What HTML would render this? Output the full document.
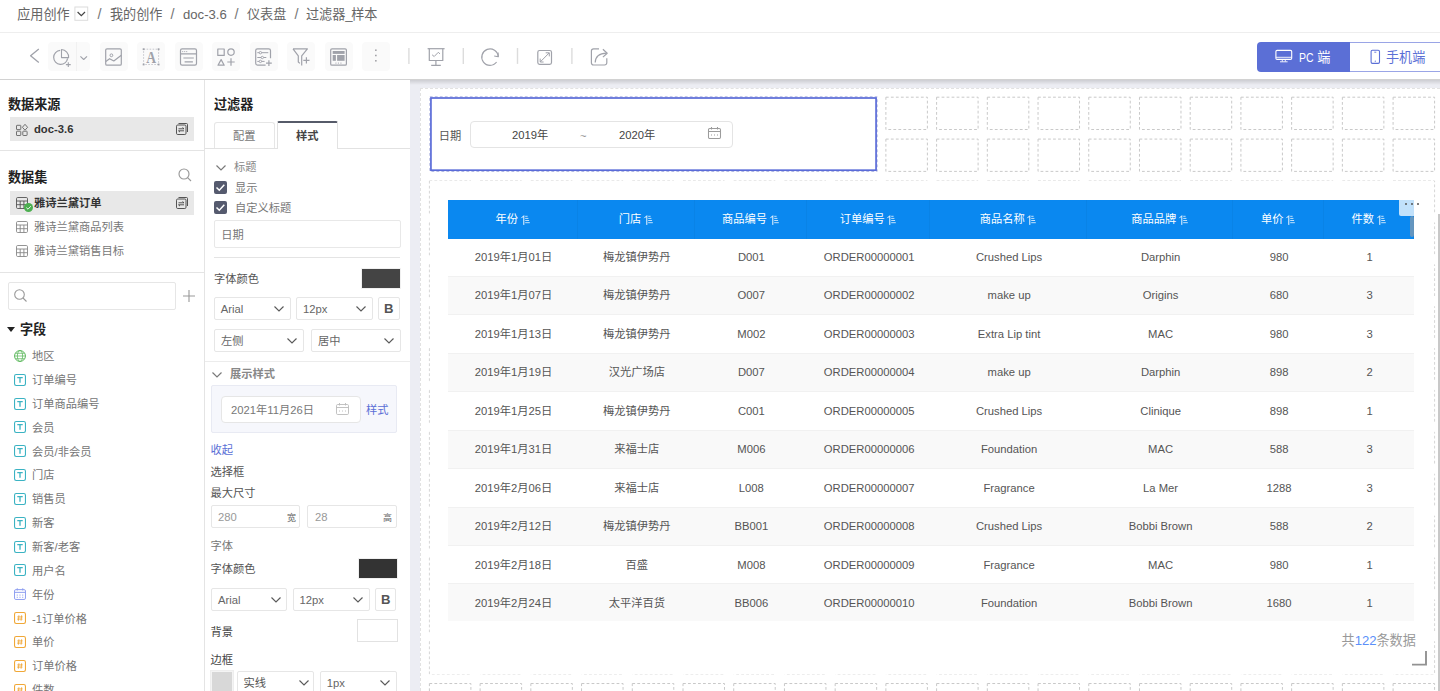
<!DOCTYPE html>
<html lang="zh-CN"><head><meta charset="utf-8"><title>过滤器_样本</title><style>
*{box-sizing:border-box;margin:0;padding:0}
html,body{width:1440px;height:691px;overflow:hidden;background:#fff}
body{font-family:"Liberation Sans", "Noto Sans CJK SC", sans-serif;font-size:11.25px;color:#666;position:relative}
.abs{position:absolute}
.t{position:absolute;white-space:nowrap;line-height:1;margin-top:1.2px}
svg{position:absolute;overflow:visible}
/* breadcrumb */
#bc{position:absolute;left:0;top:0;width:1440px;height:33px;border-bottom:1px solid #eee;background:#fff}
#bc .t{font-size:13.125px;color:#666;top:8px;line-height:14px;margin-top:0}
/* toolbar */
#tb{position:absolute;left:0;top:32px;width:1440px;height:48px;background:transparent;border-bottom:1px solid #d2d2d2;z-index:5}
.ib{position:absolute;top:9.7px;height:29.5px;background:#fafafa;border-radius:4px}
.sep{position:absolute;top:16px;width:1px;height:16px;background:#d9d9d9}
/* left */
#lp{position:absolute;left:0;top:79px;width:205px;height:612px;background:#fff;border-right:1px solid #e4e4e4}
#mp{position:absolute;left:205px;top:79px;width:205px;height:612px;background:#fff}
.h{font-weight:bold;font-size:13.125px;color:#222}
.hl{position:absolute;height:1px;background:#e4e4e4}
.gb{position:absolute;background:#e8e8e8}
.inp{position:absolute;border:1px solid #e6e6e6;border-radius:2px;background:#fff}
.fld{font-size:11.25px;color:#757575}
/* canvas */
#cv{position:absolute;left:410px;top:79px;width:1030px;height:612px;background:#ecedf3;overflow:hidden}
#cv:before{content:'';position:absolute;left:0;top:0;width:100%;height:6px;background:linear-gradient(rgba(0,0,0,.16),rgba(0,0,0,0));z-index:3}
#wc{position:absolute;left:10px;top:9px;width:1020px;height:603px;background:#fff;border-left:1px dashed #e2e2e2;border-top:1px dashed #e2e2e2}
.cell{position:absolute;border:1px dashed #d4d4d4}
.th{position:absolute;top:0;height:100%;color:#fff;font-size:11.25px;text-align:center;border-right:1px solid rgba(0,0,0,.035)}
.td{position:absolute;top:0;height:100%;color:#555;font-size:11.25px;text-align:center}
.row{position:absolute;left:0;width:966px}
</style></head><body>
<div id="bc">
<span class="t" style="left:17.2px">应用创作</span>
<span class="t" style="left:97.5px;font-size:14.5px;top:7.3px;color:#777">/</span>
<span class="t" style="left:110px">我的创作</span>
<span class="t" style="left:170.5px;font-size:14.5px;top:7.3px;color:#777">/</span>
<span class="t" style="left:183px">doc-3.6</span>
<span class="t" style="left:234.5px;font-size:14.5px;top:7.3px;color:#777">/</span>
<span class="t" style="left:247px">仪表盘</span>
<span class="t" style="left:294.5px;font-size:14.5px;top:7.3px;color:#777">/</span>
<span class="t" style="left:306px">过滤器<span style="letter-spacing:-1.4px">_</span>样本</span>
<svg style="left:0;top:0" width="100" height="32" viewBox="0 0 100 32" fill="none"><rect x="74.9" y="7" width="12.8" height="13.3" stroke="#dcdcdc" stroke-width="1"/><path d="M77.6 12 L81.3 15.6 L85 12" stroke="#444" stroke-width="1.2"/></svg>
</div>
<div id="tb">
<div class="ib" style="left:48px;width:42px"></div>
<div class="ib" style="left:99.6px;width:28px"></div>
<div class="ib" style="left:137.1px;width:28px"></div>
<div class="ib" style="left:174.6px;width:28px"></div>
<div class="ib" style="left:212.1px;width:28px"></div>
<div class="ib" style="left:249.6px;width:28px"></div>
<div class="ib" style="left:287.1px;width:28px"></div>
<div class="ib" style="left:324.6px;width:28px"></div>
<div class="ib" style="left:362.1px;width:27.6px"></div>
<div class="abs" style="left:76.3px;top:10px;width:1px;height:29px;background:#f1f1f1"></div>
<svg style="left:0;top:0" width="1440" height="48" viewBox="0 32 1440 48" fill="none" stroke="#a0a2aa" stroke-width="1.2" stroke-linejoin="round"><path d="M38.8 49 L30.6 55.8 L38.8 62.6" stroke-width="1.3"/><path d="M60.2 50.4 A7 7 0 1 0 67.6 58.4"/><path d="M61.5 49.5 V57.6 H68.6 A7.5 7.5 0 0 0 61.5 49.5 Z" stroke-width="1.1"/><path d="M65.9 64.6 h4.8 M68.3 62.2 v4.8" stroke-width="1.1"/><path d="M80.4 56.3 L83.7 59.5 L87 56.3" stroke-width="1.1"/><rect x="105.7" y="48.8" width="15.6" height="16.4" rx="1.3"/><circle cx="111.4" cy="55.3" r="1.4" stroke-width="1"/><path d="M105.8 61.4 L109.6 58.7 L113.8 61 L121.3 55.2"/><rect x="143.6" y="49.2" width="15" height="15.3" stroke="#c2c3ca" stroke-width="0.9" stroke-dasharray="1.6 1.4"/><rect x="142.7" y="48.3" width="1.8" height="1.8" fill="#a0a2aa" stroke="none"/><rect x="142.7" y="63.6" width="1.8" height="1.8" fill="#a0a2aa" stroke="none"/><rect x="157.7" y="48.3" width="1.8" height="1.8" fill="#a0a2aa" stroke="none"/><rect x="157.7" y="63.6" width="1.8" height="1.8" fill="#a0a2aa" stroke="none"/><text transform="translate(151.1 62.6) scale(0.8 1)" text-anchor="middle" font-family='"Liberation Serif",serif' font-size="17" font-weight="bold" fill="#a0a2aa" stroke="none">A</text><rect x="180.5" y="48.8" width="16" height="16.4" rx="1.6"/><path d="M180.5 53.9 h16 M183.4 58 h10.4 M184.6 61.8 h8.3"/><path d="M182.2 51.6 h1 M184.2 51.6 h1 M186.2 51.6 h1" stroke-width="0.9"/><rect x="217.8" y="49" width="6.4" height="6.4"/><circle cx="231" cy="52.1" r="3.2"/><path d="M218 65.2 L221.1 59.6 L224.2 65.2 Z"/><path d="M227.3 62 h7.4 M231 58.3 v7.4"/><path d="M270.5 58.3 V50.6 a1.8 1.8 0 0 0 -1.8 -1.8 H257.5 a1.8 1.8 0 0 0 -1.8 1.8 V63.3 a1.8 1.8 0 0 0 1.8 1.8 H265.6"/><path d="M257.3 52.7 h11 M257.3 57.5 h9 M257.3 61.4 h7.3" stroke-width="1"/><circle cx="260.4" cy="52.7" r="1.2" fill="#fafafa" stroke-width="0.9"/><circle cx="262.3" cy="57.5" r="1.2" fill="#fafafa" stroke-width="0.9"/><circle cx="260.4" cy="61.4" r="1.2" fill="#fafafa" stroke-width="0.9"/><path d="M266 63.1 h5.8 M268.9 60.2 v5.8"/><path d="M293 48.9 H307.4 L301.7 55.8 V65.6 M293 48.9 L298.3 55.8 V62 L299.9 63.4"/><path d="M303.3 60.3 h6.2 M306.4 57.2 v6.2"/><rect x="330.7" y="48.8" width="15.7" height="16.4" rx="1.3"/><rect x="332.7" y="51" width="11.9" height="2.9" fill="#a0a2aa" stroke="none"/><rect x="332.7" y="55" width="3.2" height="5.8" fill="#a0a2aa" stroke="none"/><rect x="337.1" y="55" width="7.5" height="5.8" fill="#a0a2aa" stroke="none"/><path d="M335.4 63.1 h1.1 M337.9 63.1 h1.1 M340.4 63.1 h1.1" stroke-width="0.9"/><rect x="375.1" y="49.45" width="1.5" height="1.5" fill="#9a9a9f" stroke="none"/><rect x="375.1" y="54.75" width="1.5" height="1.5" fill="#9a9a9f" stroke="none"/><rect x="375.1" y="60.05" width="1.5" height="1.5" fill="#9a9a9f" stroke="none"/><path d="M408.9 48 V63.9" stroke="#dcdcdc" stroke-width="1.4"/><path d="M463.3 48 V63.9" stroke="#dcdcdc" stroke-width="1.4"/><path d="M517.5 48 V63.9" stroke="#dcdcdc" stroke-width="1.4"/><path d="M571.9 48 V63.9" stroke="#dcdcdc" stroke-width="1.4"/><path d="M427.6 48.7 h17"/><path d="M429.3 48.7 V60.5 H442.8 V48.7"/><path d="M432.1 54.8 L434.2 56.5 L438.3 52.3 L440 53.9" stroke-width="1"/><path d="M435.9 60.5 V65.2 M431.2 65.3 h9.6"/><path d="M496.6 62 A8.2 8.2 0 1 1 498.2 56.6"/><path d="M494.2 56 L498.3 56.8 L498.1 52.4" stroke-width="1.1"/><rect x="537.8" y="50.5" width="13.7" height="13.8" rx="1.8"/><path d="M540.3 61.9 L549.2 52.9 M540.2 58.6 V62 H543.6 M545.7 52.8 H549.3 V56.4" stroke-width="1"/><path d="M599 48.9 H593.6 a2.2 2.2 0 0 0 -2.2 2.2 V62.8 a2.2 2.2 0 0 0 2.2 2.2 H604.6 a2.2 2.2 0 0 0 2.2 -2.2 V58.2"/><path d="M595.2 62.6 C595.4 57 599 53.4 606.6 53.2"/><path d="M602.9 49.3 L607.2 53.2 L602.9 57.1"/></svg>
<div class="abs" style="left:1257px;top:9.5px;width:93px;height:30px;background:#5b6fd6;border-radius:4px 0 0 4px"></div>
<div class="abs" style="left:1350px;top:9.5px;width:95px;height:30px;background:#fff;border:1px solid #9aa5e6;border-left:none"></div>
<svg style="left:1275px;top:17px" width="18" height="14" viewBox="1275 49 18 14" fill="none" stroke="#fff" stroke-width="1.1"><rect x="1275.9" y="50.4" width="15.8" height="9" rx="1.2"/><path d="M1276 57.3 h15.6 M1282.3 59.4 v2.1 M1285.3 59.4 v2.1 M1280 61.8 h7.6" stroke-width="0.9"/></svg>
<span class="t" style="left:1298.8px;top:18px;font-size:13.125px;color:#fff;transform:scaleX(0.8);transform-origin:0 0">PC</span>
<span class="t" style="left:1317.3px;top:18px;font-size:13.125px;color:#fff">端</span>
<svg style="left:1370px;top:17px" width="11" height="16" viewBox="1370 49 11 16" fill="none" stroke="#5b6fd6" stroke-width="1.1"><rect x="1371.1" y="50.2" width="8.4" height="13.2" rx="1.3"/><path d="M1374.3 52.2 h2" stroke-width="0.9"/><circle cx="1375.3" cy="61.2" r="0.6" fill="#5b6fd6" stroke="none"/></svg>
<span class="t" style="left:1386px;top:18px;font-size:13.125px;color:#5b6fd6">手机端</span>
</div>
<div id="lp">
<span class="t h" style="left:8px;top:17.7px">数据来源</span>
<div class="gb" style="left:10px;top:38.1px;width:184px;height:23.6px"></div>
<svg style="left:16px;top:44.5px" width="12" height="12" viewBox="0 0 12 12" fill="none" stroke="#6a6a6a" stroke-width="0.95"><rect x="0.5" y="1.3" width="4.3" height="4.3" rx="0.5"/><rect x="0.5" y="7.2" width="4.3" height="4.3" rx="0.5"/><rect x="6.8" y="7.2" width="4.3" height="4.3" rx="0.5"/><path d="M9 0.3 L11.6 3.3 L9 6.2 L6.4 3.3 Z"/></svg>
<span class="t" style="left:34px;top:44px;font-weight:bold;color:#333">doc-3.6</span>
<svg style="left:176px;top:44px" width="12" height="12" viewBox="0 0 12 12" fill="none" stroke="#444" stroke-width="0.9"><path d="M2.5 0.5 h8 a1 1 0 0 1 1 1 v7.5"/><rect x="0.5" y="2" width="9.5" height="9.5" rx="1.2"/><path d="M2.5 5.8 h5.5 M8 7.8 h-5.5 M6.5 4.5 L8 5.8 M4 9.1 L2.5 7.8"/></svg>
<div class="hl" style="left:0;top:71px;width:204px"></div>
<span class="t h" style="left:8px;top:90.7px">数据集</span>
<svg style="left:178px;top:89.3px" width="14" height="14" viewBox="0 0 14 14" fill="none" stroke="#999" stroke-width="1.15"><circle cx="6" cy="6" r="5"/><path d="M9.6 9.6 L13 13"/></svg>
<div class="gb" style="left:10px;top:112px;width:184px;height:24px"></div>
<svg style="left:16px;top:118.2px" width="12" height="12" viewBox="0 0 12 12" fill="none" stroke="#555" stroke-width="0.9"><rect x="0.5" y="0.5" width="11" height="11" rx="1.2"/><path d="M0.5 4 h11 M0.5 7.7 h11 M4.2 4 v7.5 M7.9 4 v7.5"/></svg>
<span class="t" style="left:34px;top:118px;font-weight:bold;color:#333">雅诗兰黛订单</span>
<svg style="left:16px;top:142.2px" width="12" height="12" viewBox="0 0 12 12" fill="none" stroke="#888" stroke-width="0.9"><rect x="0.5" y="0.5" width="11" height="11" rx="1.2"/><path d="M0.5 4 h11 M0.5 7.7 h11 M4.2 4 v7.5 M7.9 4 v7.5"/></svg>
<span class="t" style="left:34px;top:142px;color:#777">雅诗兰黛商品列表</span>
<svg style="left:16px;top:166.2px" width="12" height="12" viewBox="0 0 12 12" fill="none" stroke="#888" stroke-width="0.9"><rect x="0.5" y="0.5" width="11" height="11" rx="1.2"/><path d="M0.5 4 h11 M0.5 7.7 h11 M4.2 4 v7.5 M7.9 4 v7.5"/></svg>
<span class="t" style="left:34px;top:166px;color:#777">雅诗兰黛销售目标</span>
<svg style="left:23.7px;top:123.8px" width="9" height="9" viewBox="0 0 9 9"><circle cx="4.5" cy="4.5" r="4.5" fill="#4caf50"/><path d="M2.3 4.6 L4 6.2 L6.8 3.2" fill="none" stroke="#fff" stroke-width="0.9"/></svg>
<svg style="left:176px;top:118px" width="12" height="12" viewBox="0 0 12 12" fill="none" stroke="#444" stroke-width="0.9"><path d="M2.5 0.5 h8 a1 1 0 0 1 1 1 v7.5"/><rect x="0.5" y="2" width="9.5" height="9.5" rx="1.2"/><path d="M2.5 5.8 h5.5 M8 7.8 h-5.5 M6.5 4.5 L8 5.8 M4 9.1 L2.5 7.8"/></svg>
<div class="hl" style="left:0;top:193px;width:204px"></div>
<div class="inp" style="left:8px;top:202.5px;width:168px;height:28.5px;border-color:#e6e6e6"></div>
<svg style="left:14px;top:210px" width="14" height="14" viewBox="0 0 14 14" fill="none" stroke="#999" stroke-width="1.1"><circle cx="5.5" cy="5.5" r="4.8"/><path d="M9 9 L12.5 12.5"/></svg>
<svg style="left:183px;top:211px" width="12" height="12" viewBox="0 0 12 12" fill="none" stroke="#999" stroke-width="1.1"><path d="M0 6 h12 M6 0 v12"/></svg>
<svg style="left:7px;top:247.7px" width="8" height="5" viewBox="0 0 8 5"><path d="M0 0 h8 L4 5 Z" fill="#222"/></svg>
<span class="t h" style="left:20px;top:243px">字段</span>
<svg style="left:14px;top:270.8px" width="12" height="12" viewBox="0 0 11 11" fill="none" stroke="#5cb85c" stroke-width="0.9"><circle cx="5.5" cy="5.5" r="5"/><ellipse cx="5.5" cy="5.5" rx="2.4" ry="5" stroke-width="0.7"/><path d="M0.5 5.5 h10 M1.3 3 h8.4 M1.3 8 h8.4" stroke-width="0.7"/></svg>
<span class="t fld" style="left:32px;top:271px">地区</span>
<svg style="left:14px;top:294.65px" width="12" height="12" viewBox="0 0 11 11" fill="none" stroke="#3bb3c3" stroke-width="1"><rect x="0.5" y="0.5" width="10" height="10" rx="1.5"/><path d="M3 3.3 h5 M5.5 3.3 v4.7" stroke-width="1.2"/></svg>
<span class="t fld" style="left:32px;top:294.85px">订单编号</span>
<svg style="left:14px;top:318.5px" width="12" height="12" viewBox="0 0 11 11" fill="none" stroke="#3bb3c3" stroke-width="1"><rect x="0.5" y="0.5" width="10" height="10" rx="1.5"/><path d="M3 3.3 h5 M5.5 3.3 v4.7" stroke-width="1.2"/></svg>
<span class="t fld" style="left:32px;top:318.7px">订单商品编号</span>
<svg style="left:14px;top:342.35px" width="12" height="12" viewBox="0 0 11 11" fill="none" stroke="#3bb3c3" stroke-width="1"><rect x="0.5" y="0.5" width="10" height="10" rx="1.5"/><path d="M3 3.3 h5 M5.5 3.3 v4.7" stroke-width="1.2"/></svg>
<span class="t fld" style="left:32px;top:342.55px">会员</span>
<svg style="left:14px;top:366.2px" width="12" height="12" viewBox="0 0 11 11" fill="none" stroke="#3bb3c3" stroke-width="1"><rect x="0.5" y="0.5" width="10" height="10" rx="1.5"/><path d="M3 3.3 h5 M5.5 3.3 v4.7" stroke-width="1.2"/></svg>
<span class="t fld" style="left:32px;top:366.4px">会员/非会员</span>
<svg style="left:14px;top:390.05px" width="12" height="12" viewBox="0 0 11 11" fill="none" stroke="#3bb3c3" stroke-width="1"><rect x="0.5" y="0.5" width="10" height="10" rx="1.5"/><path d="M3 3.3 h5 M5.5 3.3 v4.7" stroke-width="1.2"/></svg>
<span class="t fld" style="left:32px;top:390.25px">门店</span>
<svg style="left:14px;top:413.9px" width="12" height="12" viewBox="0 0 11 11" fill="none" stroke="#3bb3c3" stroke-width="1"><rect x="0.5" y="0.5" width="10" height="10" rx="1.5"/><path d="M3 3.3 h5 M5.5 3.3 v4.7" stroke-width="1.2"/></svg>
<span class="t fld" style="left:32px;top:414.1px">销售员</span>
<svg style="left:14px;top:437.75px" width="12" height="12" viewBox="0 0 11 11" fill="none" stroke="#3bb3c3" stroke-width="1"><rect x="0.5" y="0.5" width="10" height="10" rx="1.5"/><path d="M3 3.3 h5 M5.5 3.3 v4.7" stroke-width="1.2"/></svg>
<span class="t fld" style="left:32px;top:437.95px">新客</span>
<svg style="left:14px;top:461.6px" width="12" height="12" viewBox="0 0 11 11" fill="none" stroke="#3bb3c3" stroke-width="1"><rect x="0.5" y="0.5" width="10" height="10" rx="1.5"/><path d="M3 3.3 h5 M5.5 3.3 v4.7" stroke-width="1.2"/></svg>
<span class="t fld" style="left:32px;top:461.8px">新客/老客</span>
<svg style="left:14px;top:485.45px" width="12" height="12" viewBox="0 0 11 11" fill="none" stroke="#3bb3c3" stroke-width="1"><rect x="0.5" y="0.5" width="10" height="10" rx="1.5"/><path d="M3 3.3 h5 M5.5 3.3 v4.7" stroke-width="1.2"/></svg>
<span class="t fld" style="left:32px;top:485.65px">用户名</span>
<svg style="left:14px;top:509.3px" width="12" height="12" viewBox="0 0 11 11" fill="none" stroke="#8c9cf0" stroke-width="0.9"><rect x="0.5" y="1.5" width="10" height="9" rx="1.2"/><path d="M0.5 4 h10 M3 0.3 v2 M8 0.3 v2 M2.5 6.5 h1 M5 6.5 h1 M7.5 6.5 h1 M2.5 8.5 h1 M5 8.5 h1 M7.5 8.5 h1"/></svg>
<span class="t fld" style="left:32px;top:509.5px">年份</span>
<svg style="left:14px;top:533.15px" width="12" height="12" viewBox="0 0 11 11" fill="none" stroke="#f0a838" stroke-width="1"><rect x="0.5" y="0.5" width="10" height="10" rx="1.5"/><path d="M4.5 3 L4 8 M7 3 L6.5 8 M3 4.5 h5 M2.8 6.5 h5" stroke-width="0.8"/></svg>
<span class="t fld" style="left:32px;top:533.35px">-1订单价格</span>
<svg style="left:14px;top:557px" width="12" height="12" viewBox="0 0 11 11" fill="none" stroke="#f0a838" stroke-width="1"><rect x="0.5" y="0.5" width="10" height="10" rx="1.5"/><path d="M4.5 3 L4 8 M7 3 L6.5 8 M3 4.5 h5 M2.8 6.5 h5" stroke-width="0.8"/></svg>
<span class="t fld" style="left:32px;top:557.2px">单价</span>
<svg style="left:14px;top:580.85px" width="12" height="12" viewBox="0 0 11 11" fill="none" stroke="#f0a838" stroke-width="1"><rect x="0.5" y="0.5" width="10" height="10" rx="1.5"/><path d="M4.5 3 L4 8 M7 3 L6.5 8 M3 4.5 h5 M2.8 6.5 h5" stroke-width="0.8"/></svg>
<span class="t fld" style="left:32px;top:581.05px">订单价格</span>
<svg style="left:14px;top:604.7px" width="12" height="12" viewBox="0 0 11 11" fill="none" stroke="#f0a838" stroke-width="1"><rect x="0.5" y="0.5" width="10" height="10" rx="1.5"/><path d="M4.5 3 L4 8 M7 3 L6.5 8 M3 4.5 h5 M2.8 6.5 h5" stroke-width="0.8"/></svg>
<span class="t fld" style="left:32px;top:604.9px">件数</span>
</div>
<div id="mp">
<span class="t h" style="left:9px;top:17.7px">过滤器</span>
<div class="hl" style="left:0;top:69px;width:205px;background:#e2e2e2"></div>
<div class="abs" style="left:9px;top:42.6px;width:61px;height:26.4px;border:1px solid #e6e6e6;border-bottom:none;border-radius:3px 3px 0 0;background:#fff"></div>
<span class="t" style="left:28px;top:51px;color:#777">配置</span>
<div class="abs" style="left:72.4px;top:42.3px;width:60.6px;height:28px;border:1px solid #e2e2e2;border-top:2px solid #565b69;border-bottom:none;border-radius:2px 2px 0 0;background:#fff"></div>
<span class="t" style="left:91px;top:51px;color:#444;font-weight:bold">样式</span>
<svg style="left:11px;top:86px" width="10" height="6" viewBox="0 0 10 6"><path d="M0.5 0.5 L5 5 L9.5 0.5" fill="none" stroke="#7a7a7a" stroke-width="1.2"/></svg>
<span class="t" style="left:29px;top:82px;color:#888">标题</span>
<svg style="left:9px;top:101.7px" width="13" height="13" viewBox="0 0 13 13"><rect width="13" height="13" rx="2" fill="#555a6e"/><path d="M2.5 6.5 L5.3 9.2 L10.3 3.8" fill="none" stroke="#fff" stroke-width="1.5"/></svg>
<span class="t" style="left:30px;top:103px;color:#777">显示</span>
<svg style="left:9px;top:122px" width="13" height="13" viewBox="0 0 13 13"><rect width="13" height="13" rx="2" fill="#555a6e"/><path d="M2.5 6.5 L5.3 9.2 L10.3 3.8" fill="none" stroke="#fff" stroke-width="1.5"/></svg>
<span class="t" style="left:30px;top:123.3px;color:#777">自定义标题</span>
<div class="inp" style="left:9px;top:140.6px;width:187px;height:28.4px;border-color:#e8e8e8"></div>
<span class="t" style="left:16.3px;top:149.7px;color:#777">日期</span>
<div class="hl" style="left:9px;top:178px;width:186px"></div>
<span class="t" style="left:9px;top:194px;color:#555">字体颜色</span>
<div class="abs" style="left:156.2px;top:188.5px;width:39.5px;height:21px;background:#444;border:1px solid #f0f0f0"></div>
<div class="inp" style="left:9.3px;top:217.8px;width:77.1px;height:23px"></div>
<span class="t" style="left:15.8px;top:223.5px;color:#666">Arial</span>
<svg style="left:69.4px;top:226.8px" width="10" height="6" viewBox="0 0 10 6"><path d="M0.5 0.5 L5 5 L9.5 0.5" fill="none" stroke="#5a5a5a" stroke-width="1.15"/></svg>
<div class="inp" style="left:91px;top:217.8px;width:77.1px;height:23px"></div>
<span class="t" style="left:98px;top:223.5px;color:#666">12px</span>
<svg style="left:151.1px;top:226.8px" width="10" height="6" viewBox="0 0 10 6"><path d="M0.5 0.5 L5 5 L9.5 0.5" fill="none" stroke="#5a5a5a" stroke-width="1.15"/></svg>
<div class="inp" style="left:172.7px;top:217.8px;width:22.5px;height:23px"></div>
<span class="t" style="left:179px;top:221.8px;color:#555;font-weight:bold;font-size:13.125px">B</span>
<div class="inp" style="left:9px;top:250px;width:90px;height:23px"></div>
<span class="t" style="left:16px;top:256px;color:#666">左侧</span>
<svg style="left:82px;top:259px" width="10" height="6" viewBox="0 0 10 6"><path d="M0.5 0.5 L5 5 L9.5 0.5" fill="none" stroke="#5a5a5a" stroke-width="1.15"/></svg>
<div class="inp" style="left:106px;top:250px;width:90px;height:23px"></div>
<span class="t" style="left:113px;top:256px;color:#666">居中</span>
<svg style="left:179px;top:259px" width="10" height="6" viewBox="0 0 10 6"><path d="M0.5 0.5 L5 5 L9.5 0.5" fill="none" stroke="#5a5a5a" stroke-width="1.15"/></svg>
<div class="hl" style="left:0;top:282px;width:205px;background:#ececec"></div>
<svg style="left:7px;top:293px" width="10" height="6" viewBox="0 0 10 6"><path d="M0.5 0.5 L5 5 L9.5 0.5" fill="none" stroke="#7a7a7a" stroke-width="1.2"/></svg>
<span class="t" style="left:25px;top:289px;color:#888;font-weight:bold">展示样式</span>
<div class="abs" style="left:6px;top:306px;width:186px;height:48px;background:#f6f7fc;border:1px solid #e8eaf3;border-radius:2px"></div>
<div class="inp" style="left:16px;top:317px;width:140px;height:27px;border-radius:4px;border-color:#e6e6e6"></div>
<span class="t" style="left:26px;top:325px;color:#777">2021年11月26日</span>
<svg style="left:131px;top:324px" width="13" height="12" viewBox="0 0 13 12" fill="none" stroke="#bbb" stroke-width="0.9"><rect x="0.5" y="1.5" width="12" height="10" rx="1.2"/><path d="M0.5 4.5 h12 M3.5 0 v2.5 M9.5 0 v2.5 M3 8 h1 M6 8 h1 M9 8 h1"/></svg>
<span class="t" style="left:161px;top:325px;color:#5b6fd6">样式</span>
<span class="t" style="left:5.4px;top:365px;color:#5b6fd6">收起</span>
<span class="t" style="left:5.5px;top:387px;color:#555">选择框</span>
<span class="t" style="left:5.5px;top:408px;color:#555">最大尺寸</span>
<div class="inp" style="left:6px;top:426px;width:89px;height:23px"></div>
<span class="t" style="left:13px;top:432px;color:#999">280</span>
<span class="t" style="left:82px;top:434px;color:#666;font-size:9px">宽</span>
<div class="inp" style="left:102px;top:426px;width:90px;height:23px"></div>
<span class="t" style="left:110px;top:432px;color:#999">28</span>
<span class="t" style="left:178px;top:434px;color:#666;font-size:9px">高</span>
<span class="t" style="left:5.5px;top:461px;color:#777">字体</span>
<span class="t" style="left:5.5px;top:484px;color:#555">字体颜色</span>
<div class="abs" style="left:153px;top:478.7px;width:39.5px;height:21px;background:#333;border:1px solid #f0f0f0"></div>
<div class="inp" style="left:6.4px;top:509px;width:76.1px;height:23px"></div>
<span class="t" style="left:12.9px;top:514.7px;color:#666">Arial</span>
<svg style="left:65.5px;top:518px" width="10" height="6" viewBox="0 0 10 6"><path d="M0.5 0.5 L5 5 L9.5 0.5" fill="none" stroke="#5a5a5a" stroke-width="1.15"/></svg>
<div class="inp" style="left:87.6px;top:509px;width:77px;height:23px"></div>
<span class="t" style="left:94.6px;top:514.7px;color:#666">12px</span>
<svg style="left:147.6px;top:518px" width="10" height="6" viewBox="0 0 10 6"><path d="M0.5 0.5 L5 5 L9.5 0.5" fill="none" stroke="#5a5a5a" stroke-width="1.15"/></svg>
<div class="inp" style="left:169.6px;top:509px;width:21.8px;height:23px"></div>
<span class="t" style="left:175.9px;top:513px;color:#555;font-weight:bold;font-size:13.125px">B</span>
<span class="t" style="left:5.4px;top:546.7px;color:#444">背景</span>
<div class="abs" style="left:152px;top:540px;width:41px;height:23px;background:#fff;border:1px solid #e2e2e2"></div>
<span class="t" style="left:5.4px;top:574.4px;color:#444">边框</span>
<div class="abs" style="left:6px;top:592px;width:21.5px;height:23px;background:#d8d8d8;border:1px solid #f4f4f4;box-shadow:0 0 0 1px #eee"></div>
<div class="inp" style="left:32.2px;top:592px;width:77.3px;height:23px"></div>
<span class="t" style="left:38.5px;top:598px;color:#555">实线</span>
<svg style="left:94px;top:601px" width="10" height="6" viewBox="0 0 10 6"><path d="M0.5 0.5 L5 5 L9.5 0.5" fill="none" stroke="#5a5a5a" stroke-width="1.15"/></svg>
<div class="inp" style="left:115px;top:592px;width:77px;height:23px"></div>
<span class="t" style="left:121.8px;top:598px;color:#666">1px</span>
<svg style="left:175px;top:601px" width="10" height="6" viewBox="0 0 10 6"><path d="M0.5 0.5 L5 5 L9.5 0.5" fill="none" stroke="#5a5a5a" stroke-width="1.15"/></svg>
</div>
<div id="cv"><div id="wc"></div>
<svg style="left:0;top:0" width="1030" height="612" viewBox="0 0 1030 612" fill="none" stroke="#c9c9c9" stroke-width="1" stroke-dasharray="2.8 2.2"><rect x="475.88" y="18.20" width="41.50" height="32.30"/><rect x="526.60" y="18.20" width="41.50" height="32.30"/><rect x="577.32" y="18.20" width="41.50" height="32.30"/><rect x="628.04" y="18.20" width="41.50" height="32.30"/><rect x="678.76" y="18.20" width="41.50" height="32.30"/><rect x="729.48" y="18.20" width="41.50" height="32.30"/><rect x="780.20" y="18.20" width="41.50" height="32.30"/><rect x="830.92" y="18.20" width="41.50" height="32.30"/><rect x="881.64" y="18.20" width="41.50" height="32.30"/><rect x="932.36" y="18.20" width="41.50" height="32.30"/><rect x="983.08" y="18.20" width="41.50" height="32.30"/><rect x="475.88" y="60.08" width="41.50" height="32.30"/><rect x="526.60" y="60.08" width="41.50" height="32.30"/><rect x="577.32" y="60.08" width="41.50" height="32.30"/><rect x="628.04" y="60.08" width="41.50" height="32.30"/><rect x="678.76" y="60.08" width="41.50" height="32.30"/><rect x="729.48" y="60.08" width="41.50" height="32.30"/><rect x="780.20" y="60.08" width="41.50" height="32.30"/><rect x="830.92" y="60.08" width="41.50" height="32.30"/><rect x="881.64" y="60.08" width="41.50" height="32.30"/><rect x="932.36" y="60.08" width="41.50" height="32.30"/><rect x="983.08" y="60.08" width="41.50" height="32.30"/><rect x="19.40" y="101.96" width="41.50" height="32.30" stroke="#d6d6d6"/><rect x="70.12" y="101.96" width="41.50" height="32.30" stroke="#d6d6d6"/><rect x="120.84" y="101.96" width="41.50" height="32.30" stroke="#d6d6d6"/><rect x="171.56" y="101.96" width="41.50" height="32.30" stroke="#d6d6d6"/><rect x="222.28" y="101.96" width="41.50" height="32.30" stroke="#d6d6d6"/><rect x="273.00" y="101.96" width="41.50" height="32.30" stroke="#d6d6d6"/><rect x="323.72" y="101.96" width="41.50" height="32.30" stroke="#d6d6d6"/><rect x="374.44" y="101.96" width="41.50" height="32.30" stroke="#d6d6d6"/><rect x="425.16" y="101.96" width="41.50" height="32.30" stroke="#d6d6d6"/><rect x="475.88" y="101.96" width="41.50" height="32.30" stroke="#d6d6d6"/><rect x="526.60" y="101.96" width="41.50" height="32.30" stroke="#d6d6d6"/><rect x="577.32" y="101.96" width="41.50" height="32.30" stroke="#d6d6d6"/><rect x="628.04" y="101.96" width="41.50" height="32.30" stroke="#d6d6d6"/><rect x="678.76" y="101.96" width="41.50" height="32.30" stroke="#d6d6d6"/><rect x="729.48" y="101.96" width="41.50" height="32.30" stroke="#d6d6d6"/><rect x="780.20" y="101.96" width="41.50" height="32.30" stroke="#d6d6d6"/><rect x="830.92" y="101.96" width="41.50" height="32.30" stroke="#d6d6d6"/><rect x="881.64" y="101.96" width="41.50" height="32.30" stroke="#d6d6d6"/><rect x="932.36" y="101.96" width="41.50" height="32.30" stroke="#d6d6d6"/><rect x="983.08" y="101.96" width="41.50" height="32.30" stroke="#d6d6d6"/><rect x="19.40" y="143.84" width="41.50" height="32.30" stroke="#d6d6d6"/><rect x="983.08" y="143.84" width="41.50" height="32.30" stroke="#d6d6d6"/><rect x="19.40" y="185.72" width="41.50" height="32.30" stroke="#d6d6d6"/><rect x="983.08" y="185.72" width="41.50" height="32.30" stroke="#d6d6d6"/><rect x="19.40" y="227.60" width="41.50" height="32.30" stroke="#d6d6d6"/><rect x="983.08" y="227.60" width="41.50" height="32.30" stroke="#d6d6d6"/><rect x="19.40" y="269.48" width="41.50" height="32.30" stroke="#d6d6d6"/><rect x="983.08" y="269.48" width="41.50" height="32.30" stroke="#d6d6d6"/><rect x="19.40" y="311.36" width="41.50" height="32.30" stroke="#d6d6d6"/><rect x="983.08" y="311.36" width="41.50" height="32.30" stroke="#d6d6d6"/><rect x="19.40" y="353.24" width="41.50" height="32.30" stroke="#d6d6d6"/><rect x="983.08" y="353.24" width="41.50" height="32.30" stroke="#d6d6d6"/><rect x="19.40" y="395.12" width="41.50" height="32.30" stroke="#d6d6d6"/><rect x="983.08" y="395.12" width="41.50" height="32.30" stroke="#d6d6d6"/><rect x="19.40" y="437.00" width="41.50" height="32.30" stroke="#d6d6d6"/><rect x="983.08" y="437.00" width="41.50" height="32.30" stroke="#d6d6d6"/><rect x="19.40" y="478.88" width="41.50" height="32.30" stroke="#d6d6d6"/><rect x="983.08" y="478.88" width="41.50" height="32.30" stroke="#d6d6d6"/><rect x="19.40" y="520.76" width="41.50" height="32.30" stroke="#d6d6d6"/><rect x="983.08" y="520.76" width="41.50" height="32.30" stroke="#d6d6d6"/><rect x="19.40" y="562.64" width="41.50" height="32.30" stroke="#d6d6d6"/><rect x="70.12" y="562.64" width="41.50" height="32.30" stroke="#d6d6d6"/><rect x="120.84" y="562.64" width="41.50" height="32.30" stroke="#d6d6d6"/><rect x="171.56" y="562.64" width="41.50" height="32.30" stroke="#d6d6d6"/><rect x="222.28" y="562.64" width="41.50" height="32.30" stroke="#d6d6d6"/><rect x="273.00" y="562.64" width="41.50" height="32.30" stroke="#d6d6d6"/><rect x="323.72" y="562.64" width="41.50" height="32.30" stroke="#d6d6d6"/><rect x="374.44" y="562.64" width="41.50" height="32.30" stroke="#d6d6d6"/><rect x="425.16" y="562.64" width="41.50" height="32.30" stroke="#d6d6d6"/><rect x="475.88" y="562.64" width="41.50" height="32.30" stroke="#d6d6d6"/><rect x="526.60" y="562.64" width="41.50" height="32.30" stroke="#d6d6d6"/><rect x="577.32" y="562.64" width="41.50" height="32.30" stroke="#d6d6d6"/><rect x="628.04" y="562.64" width="41.50" height="32.30" stroke="#d6d6d6"/><rect x="678.76" y="562.64" width="41.50" height="32.30" stroke="#d6d6d6"/><rect x="729.48" y="562.64" width="41.50" height="32.30" stroke="#d6d6d6"/><rect x="780.20" y="562.64" width="41.50" height="32.30" stroke="#d6d6d6"/><rect x="830.92" y="562.64" width="41.50" height="32.30" stroke="#d6d6d6"/><rect x="881.64" y="562.64" width="41.50" height="32.30" stroke="#d6d6d6"/><rect x="932.36" y="562.64" width="41.50" height="32.30" stroke="#d6d6d6"/><rect x="983.08" y="562.64" width="41.50" height="32.30" stroke="#d6d6d6"/><rect x="19.40" y="604.52" width="41.50" height="32.30"/><rect x="70.12" y="604.52" width="41.50" height="32.30"/><rect x="120.84" y="604.52" width="41.50" height="32.30"/><rect x="171.56" y="604.52" width="41.50" height="32.30"/><rect x="222.28" y="604.52" width="41.50" height="32.30"/><rect x="273.00" y="604.52" width="41.50" height="32.30"/><rect x="323.72" y="604.52" width="41.50" height="32.30"/><rect x="374.44" y="604.52" width="41.50" height="32.30"/><rect x="425.16" y="604.52" width="41.50" height="32.30"/><rect x="475.88" y="604.52" width="41.50" height="32.30"/><rect x="526.60" y="604.52" width="41.50" height="32.30"/><rect x="577.32" y="604.52" width="41.50" height="32.30"/><rect x="628.04" y="604.52" width="41.50" height="32.30"/><rect x="678.76" y="604.52" width="41.50" height="32.30"/><rect x="729.48" y="604.52" width="41.50" height="32.30"/><rect x="780.20" y="604.52" width="41.50" height="32.30"/><rect x="830.92" y="604.52" width="41.50" height="32.30"/><rect x="881.64" y="604.52" width="41.50" height="32.30"/><rect x="932.36" y="604.52" width="41.50" height="32.30"/><rect x="983.08" y="604.52" width="41.50" height="32.30"/></svg>
<div class="abs" style="left:20px;top:18.4px;width:447px;height:74.2px;background:#fff"></div>
<svg style="left:20px;top:18.4px" width="447" height="74.2" viewBox="0 0 447 74.2" fill="none"><rect x="-0.2" y="-0.2" width="447.4" height="74.6" stroke="#aeb4e0" stroke-width="1" stroke-dasharray="2.8 2.2"/><rect x="0.9" y="1" width="445.2" height="72.2" stroke="#5a6bd8" stroke-width="1.7"/></svg>
<span class="t" style="left:28.8px;top:50.5px;color:#555">日期</span>
<div class="inp" style="left:60.3px;top:42px;width:262.7px;height:27px;border-radius:4px;border-color:#e4e4e4"></div>
<span class="t" style="left:102px;top:50px;color:#444">2019年</span>
<span class="t" style="left:170px;top:51px;color:#999">~</span>
<span class="t" style="left:209px;top:50px;color:#444">2020年</span>
<svg style="left:297.7px;top:48.3px" width="13" height="12" viewBox="0 0 13 12" fill="none" stroke="#9c9c9c" stroke-width="1.05"><rect x="0.5" y="1.5" width="12" height="10" rx="1.2"/><path d="M0.5 4.5 h12 M3.5 0 v2.5 M9.5 0 v2.5 M3 8 h1 M6 8 h1 M9 8 h1"/></svg>
<div class="abs" style="left:19.7px;top:102.26px;width:1004.58px;height:492.38px;background:#fff"></div>
<div class="abs" style="left:38px;top:121px;width:966px;height:421.85px">
<div class="row" style="top:0;height:39px;background:#0a88f0">
<div class="th" style="left:0px;width:130px;line-height:39px">年份<svg style="position:static;display:inline-block;vertical-align:-2.2px;margin-left:2.6px" width="9" height="10" viewBox="0 0 9 10" fill="none" stroke="#fff" stroke-width="0.75"><path d="M2.8 9.9 V0.7 L0.4 3.1" stroke-width="0.95"/><path d="M4.2 1.3 h2.4 M4.2 3.4 h3.2 M4.2 5.5 h3.9 M4.2 7.7 h4.6"/></svg></div>
<div class="th" style="left:130px;width:116.5px;line-height:39px">门店<svg style="position:static;display:inline-block;vertical-align:-2.2px;margin-left:2.6px" width="9" height="10" viewBox="0 0 9 10" fill="none" stroke="#fff" stroke-width="0.75"><path d="M2.8 9.9 V0.7 L0.4 3.1" stroke-width="0.95"/><path d="M4.2 1.3 h2.4 M4.2 3.4 h3.2 M4.2 5.5 h3.9 M4.2 7.7 h4.6"/></svg></div>
<div class="th" style="left:246.5px;width:112.5px;line-height:39px">商品编号<svg style="position:static;display:inline-block;vertical-align:-2.2px;margin-left:2.6px" width="9" height="10" viewBox="0 0 9 10" fill="none" stroke="#fff" stroke-width="0.75"><path d="M2.8 9.9 V0.7 L0.4 3.1" stroke-width="0.95"/><path d="M4.2 1.3 h2.4 M4.2 3.4 h3.2 M4.2 5.5 h3.9 M4.2 7.7 h4.6"/></svg></div>
<div class="th" style="left:359px;width:123px;line-height:39px">订单编号<svg style="position:static;display:inline-block;vertical-align:-2.2px;margin-left:2.6px" width="9" height="10" viewBox="0 0 9 10" fill="none" stroke="#fff" stroke-width="0.75"><path d="M2.8 9.9 V0.7 L0.4 3.1" stroke-width="0.95"/><path d="M4.2 1.3 h2.4 M4.2 3.4 h3.2 M4.2 5.5 h3.9 M4.2 7.7 h4.6"/></svg></div>
<div class="th" style="left:482px;width:157px;line-height:39px">商品名称<svg style="position:static;display:inline-block;vertical-align:-2.2px;margin-left:2.6px" width="9" height="10" viewBox="0 0 9 10" fill="none" stroke="#fff" stroke-width="0.75"><path d="M2.8 9.9 V0.7 L0.4 3.1" stroke-width="0.95"/><path d="M4.2 1.3 h2.4 M4.2 3.4 h3.2 M4.2 5.5 h3.9 M4.2 7.7 h4.6"/></svg></div>
<div class="th" style="left:639px;width:146px;line-height:39px">商品品牌<svg style="position:static;display:inline-block;vertical-align:-2.2px;margin-left:2.6px" width="9" height="10" viewBox="0 0 9 10" fill="none" stroke="#fff" stroke-width="0.75"><path d="M2.8 9.9 V0.7 L0.4 3.1" stroke-width="0.95"/><path d="M4.2 1.3 h2.4 M4.2 3.4 h3.2 M4.2 5.5 h3.9 M4.2 7.7 h4.6"/></svg></div>
<div class="th" style="left:785px;width:91px;line-height:39px">单价<svg style="position:static;display:inline-block;vertical-align:-2.2px;margin-left:2.6px" width="9" height="10" viewBox="0 0 9 10" fill="none" stroke="#fff" stroke-width="0.75"><path d="M2.8 9.9 V0.7 L0.4 3.1" stroke-width="0.95"/><path d="M4.2 1.3 h2.4 M4.2 3.4 h3.2 M4.2 5.5 h3.9 M4.2 7.7 h4.6"/></svg></div>
<div class="th" style="left:876px;width:90px;line-height:39px">件数<svg style="position:static;display:inline-block;vertical-align:-2.2px;margin-left:2.6px" width="9" height="10" viewBox="0 0 9 10" fill="none" stroke="#fff" stroke-width="0.75"><path d="M2.8 9.9 V0.7 L0.4 3.1" stroke-width="0.95"/><path d="M4.2 1.3 h2.4 M4.2 3.4 h3.2 M4.2 5.5 h3.9 M4.2 7.7 h4.6"/></svg></div>
</div>
<div class="row" style="top:39px;height:38px;background:#fff;border-bottom:1px solid #f1f1f1">
<div class="td" style="left:0.6px;width:130px;line-height:37px">2019年1月01日</div>
<div class="td" style="left:130.6px;width:116.5px;line-height:37px">梅龙镇伊势丹</div>
<div class="td" style="left:247.1px;width:112.5px;line-height:37px">D001</div>
<div class="td" style="left:359.6px;width:123px;line-height:37px">ORDER00000001</div>
<div class="td" style="left:482.6px;width:157px;line-height:37px">Crushed Lips</div>
<div class="td" style="left:639.6px;width:146px;line-height:37px">Darphin</div>
<div class="td" style="left:785.6px;width:91px;line-height:37px">980</div>
<div class="td" style="left:876.6px;width:90px;line-height:37px">1</div>
</div>
<div class="row" style="top:77px;height:38px;background:#f9f9f9;border-bottom:1px solid #f1f1f1">
<div class="td" style="left:0.6px;width:130px;line-height:37.88px">2019年1月07日</div>
<div class="td" style="left:130.6px;width:116.5px;line-height:37.88px">梅龙镇伊势丹</div>
<div class="td" style="left:247.1px;width:112.5px;line-height:37.88px">O007</div>
<div class="td" style="left:359.6px;width:123px;line-height:37.88px">ORDER00000002</div>
<div class="td" style="left:482.6px;width:157px;line-height:37.88px">make up</div>
<div class="td" style="left:639.6px;width:146px;line-height:37.88px">Origins</div>
<div class="td" style="left:785.6px;width:91px;line-height:37.88px">680</div>
<div class="td" style="left:876.6px;width:90px;line-height:37.88px">3</div>
</div>
<div class="row" style="top:115px;height:39px;background:#fff;border-bottom:1px solid #f1f1f1">
<div class="td" style="left:0.6px;width:130px;line-height:38.76px">2019年1月13日</div>
<div class="td" style="left:130.6px;width:116.5px;line-height:38.76px">梅龙镇伊势丹</div>
<div class="td" style="left:247.1px;width:112.5px;line-height:38.76px">M002</div>
<div class="td" style="left:359.6px;width:123px;line-height:38.76px">ORDER00000003</div>
<div class="td" style="left:482.6px;width:157px;line-height:38.76px">Extra Lip tint</div>
<div class="td" style="left:639.6px;width:146px;line-height:38.76px">MAC</div>
<div class="td" style="left:785.6px;width:91px;line-height:38.76px">980</div>
<div class="td" style="left:876.6px;width:90px;line-height:38.76px">3</div>
</div>
<div class="row" style="top:154px;height:38px;background:#f9f9f9;border-bottom:1px solid #f1f1f1">
<div class="td" style="left:0.6px;width:130px;line-height:37.64px">2019年1月19日</div>
<div class="td" style="left:130.6px;width:116.5px;line-height:37.64px">汉光广场店</div>
<div class="td" style="left:247.1px;width:112.5px;line-height:37.64px">D007</div>
<div class="td" style="left:359.6px;width:123px;line-height:37.64px">ORDER00000004</div>
<div class="td" style="left:482.6px;width:157px;line-height:37.64px">make up</div>
<div class="td" style="left:639.6px;width:146px;line-height:37.64px">Darphin</div>
<div class="td" style="left:785.6px;width:91px;line-height:37.64px">898</div>
<div class="td" style="left:876.6px;width:90px;line-height:37.64px">2</div>
</div>
<div class="row" style="top:192px;height:39px;background:#fff;border-bottom:1px solid #f1f1f1">
<div class="td" style="left:0.6px;width:130px;line-height:38.52px">2019年1月25日</div>
<div class="td" style="left:130.6px;width:116.5px;line-height:38.52px">梅龙镇伊势丹</div>
<div class="td" style="left:247.1px;width:112.5px;line-height:38.52px">C001</div>
<div class="td" style="left:359.6px;width:123px;line-height:38.52px">ORDER00000005</div>
<div class="td" style="left:482.6px;width:157px;line-height:38.52px">Crushed Lips</div>
<div class="td" style="left:639.6px;width:146px;line-height:38.52px">Clinique</div>
<div class="td" style="left:785.6px;width:91px;line-height:38.52px">898</div>
<div class="td" style="left:876.6px;width:90px;line-height:38.52px">1</div>
</div>
<div class="row" style="top:231px;height:38px;background:#f9f9f9;border-bottom:1px solid #f1f1f1">
<div class="td" style="left:0.6px;width:130px;line-height:37.4px">2019年1月31日</div>
<div class="td" style="left:130.6px;width:116.5px;line-height:37.4px">来福士店</div>
<div class="td" style="left:247.1px;width:112.5px;line-height:37.4px">M006</div>
<div class="td" style="left:359.6px;width:123px;line-height:37.4px">ORDER00000006</div>
<div class="td" style="left:482.6px;width:157px;line-height:37.4px">Foundation</div>
<div class="td" style="left:639.6px;width:146px;line-height:37.4px">MAC</div>
<div class="td" style="left:785.6px;width:91px;line-height:37.4px">588</div>
<div class="td" style="left:876.6px;width:90px;line-height:37.4px">3</div>
</div>
<div class="row" style="top:269px;height:39px;background:#fff;border-bottom:1px solid #f1f1f1">
<div class="td" style="left:0.6px;width:130px;line-height:38.28px">2019年2月06日</div>
<div class="td" style="left:130.6px;width:116.5px;line-height:38.28px">来福士店</div>
<div class="td" style="left:247.1px;width:112.5px;line-height:38.28px">L008</div>
<div class="td" style="left:359.6px;width:123px;line-height:38.28px">ORDER00000007</div>
<div class="td" style="left:482.6px;width:157px;line-height:38.28px">Fragrance</div>
<div class="td" style="left:639.6px;width:146px;line-height:38.28px">La Mer</div>
<div class="td" style="left:785.6px;width:91px;line-height:38.28px">1288</div>
<div class="td" style="left:876.6px;width:90px;line-height:38.28px">3</div>
</div>
<div class="row" style="top:308px;height:38px;background:#f9f9f9;border-bottom:1px solid #f1f1f1">
<div class="td" style="left:0.6px;width:130px;line-height:37.16px">2019年2月12日</div>
<div class="td" style="left:130.6px;width:116.5px;line-height:37.16px">梅龙镇伊势丹</div>
<div class="td" style="left:247.1px;width:112.5px;line-height:37.16px">BB001</div>
<div class="td" style="left:359.6px;width:123px;line-height:37.16px">ORDER00000008</div>
<div class="td" style="left:482.6px;width:157px;line-height:37.16px">Crushed Lips</div>
<div class="td" style="left:639.6px;width:146px;line-height:37.16px">Bobbi Brown</div>
<div class="td" style="left:785.6px;width:91px;line-height:37.16px">588</div>
<div class="td" style="left:876.6px;width:90px;line-height:37.16px">2</div>
</div>
<div class="row" style="top:346px;height:38px;background:#fff;border-bottom:1px solid #f1f1f1">
<div class="td" style="left:0.6px;width:130px;line-height:38.04px">2019年2月18日</div>
<div class="td" style="left:130.6px;width:116.5px;line-height:38.04px">百盛</div>
<div class="td" style="left:247.1px;width:112.5px;line-height:38.04px">M008</div>
<div class="td" style="left:359.6px;width:123px;line-height:38.04px">ORDER00000009</div>
<div class="td" style="left:482.6px;width:157px;line-height:38.04px">Fragrance</div>
<div class="td" style="left:639.6px;width:146px;line-height:38.04px">MAC</div>
<div class="td" style="left:785.6px;width:91px;line-height:38.04px">980</div>
<div class="td" style="left:876.6px;width:90px;line-height:38.04px">1</div>
</div>
<div class="row" style="top:384px;height:36.5px;background:#f9f9f9;overflow:hidden">
<div class="td" style="left:0.6px;width:130px;line-height:38.92px">2019年2月24日</div>
<div class="td" style="left:130.6px;width:116.5px;line-height:38.92px">太平洋百货</div>
<div class="td" style="left:247.1px;width:112.5px;line-height:38.92px">BB006</div>
<div class="td" style="left:359.6px;width:123px;line-height:38.92px">ORDER00000010</div>
<div class="td" style="left:482.6px;width:157px;line-height:38.92px">Foundation</div>
<div class="td" style="left:639.6px;width:146px;line-height:38.92px">Bobbi Brown</div>
<div class="td" style="left:785.6px;width:91px;line-height:38.92px">1680</div>
<div class="td" style="left:876.6px;width:90px;line-height:38.92px">1</div>
</div>
</div>
<div class="abs" style="left:989px;top:121px;width:15px;height:16px;background:rgba(255,255,255,.75);border-radius:0 0 0 2px"></div>
<div class="abs" style="left:1000px;top:137px;width:4px;height:21px;background:rgba(160,160,160,.6);border-radius:2px"></div>
<div class="abs" style="left:994.7px;top:124px;width:2px;height:2px;background:#555;border-radius:1px"></div>
<div class="abs" style="left:1000.7px;top:124px;width:2px;height:2px;background:#555;border-radius:1px"></div>
<div class="abs" style="left:1006.7px;top:124px;width:2px;height:2px;background:#555;border-radius:1px"></div>
<span class="t" style="left:931.5px;top:553.8px;font-size:13.125px;color:#999">共<span style="color:#5b8ff9">122</span>条数据</span>
<svg style="left:1001px;top:571px" width="16" height="16" viewBox="0 0 16 16" fill="none" stroke="#929292" stroke-width="1.9"><path d="M1 14.6 H15 V1"/></svg>
<div class="abs" style="left:1028px;top:135px;width:2px;height:480px;background:#c8c8c8"></div>
</div>
</body></html>
